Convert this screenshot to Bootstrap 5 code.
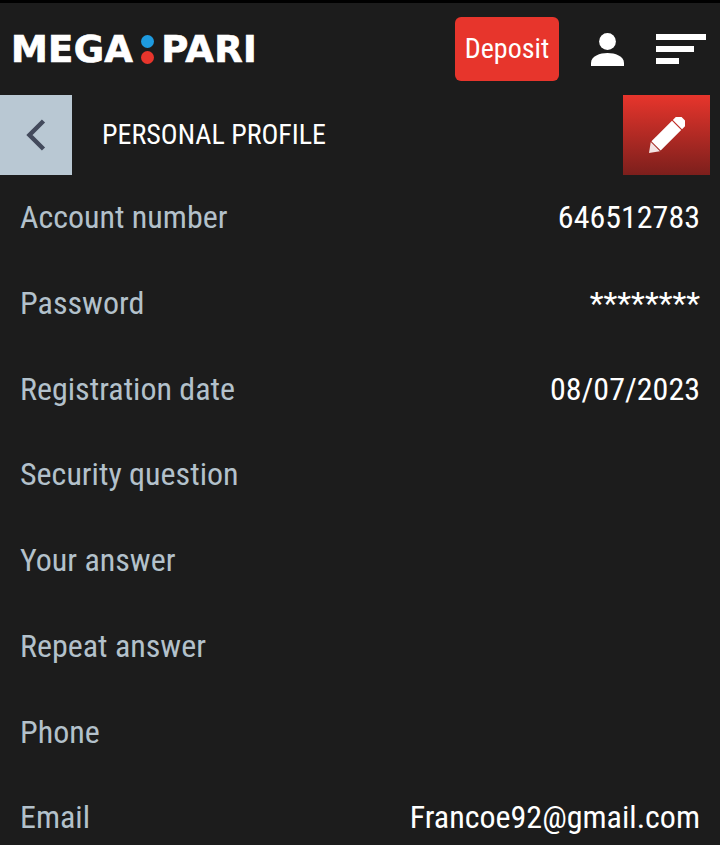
<!DOCTYPE html>
<html lang="en">
<head>
<title>Personal profile</title>
<meta charset="utf-8">
<meta name="viewport" content="width=device-width, initial-scale=1">
<link href="https://cdn.jsdelivr.net/npm/bootstrap@5.3.3/dist/css/bootstrap.min.css" rel="stylesheet">
<style>
html, body { height: 845px; overflow: hidden; }
body { background: #1c1c1c; font-family: Roboto, "Liberation Sans", sans-serif; font-stretch: 75%; border-top: 3px solid #000; }
.top-bar { height: 92px; padding: 0 14px 0 11px; }
.logo-text { font-family: "DejaVu Sans", sans-serif; font-weight: 700; font-size: 37px; letter-spacing: .3px; line-height: 1; color: #fff; font-stretch: normal; -webkit-text-stroke: .7px #fff; }
.logo-dots { width: 13px; gap: 3px; margin: 0 7px 0 8px; }
.logo-dots i { display: block; width: 13px; height: 13px; border-radius: 50%; }
.deposit-btn { width: 104px; height: 64px; background: #e7352c; border: 0; border-radius: 6px; color: #fff; font-size: 28px; font-stretch: 75%; padding: 0; margin-right: 32px; }
.head-row { height: 80px; }
.back-box { width: 72px; background: #b9c8d3; }
.head-title { color: #fff; font-size: 28px; margin-left: 30px; }
.edit-box { width: 87px; margin-right: 10px; background: linear-gradient(#e7352c, #7c1f1c); }
.info-row { height: 85.75px; padding: 0 20px 1.4px 20px; font-size: 32px; }
.info-label { color: #b3c1cb; }
.info-value { color: #fff; }
.user-icon { margin-right: 32px; }
</style>
</head>
<body>
<div class="top-bar d-flex align-items-center">
    <div class="d-flex align-items-center flex-grow-1">
        <span class="logo-text">MEGA</span>
        <span class="logo-dots d-flex flex-column"><i style="background:#1e9be0"></i><i style="background:#e7352c"></i></span>
        <span class="logo-text">PARI</span>
    </div>
    <button type="button" class="deposit-btn">Deposit</button>
    <svg width="33" height="33" viewBox="0 0 33 33" class="user-icon"><circle cx="16.5" cy="8.5" r="8.4" fill="#fff"/><path d="M0 33v-3c0-7 9-10 16.5-10S33 23 33 30v3z" fill="#fff"/></svg>
    <svg width="50" height="30" viewBox="0 0 50 30" class="flex-shrink-0"><rect width="50" height="6" fill="#fff"/><rect y="12" width="38" height="6" fill="#fff"/><rect y="24" width="23" height="6" fill="#fff"/></svg>
</div>
<div class="head-row d-flex align-items-stretch">
    <div class="back-box d-flex align-items-center justify-content-center">
        <svg width="20" height="32" viewBox="0 0 20 32"><path d="M17.500 2 3.500 16l14 14" fill="none" stroke="#434a5c" stroke-width="4.500"/></svg>
    </div>
    <div class="head-title flex-grow-1 d-flex align-items-center">PERSONAL PROFILE</div>
    <div class="edit-box d-flex align-items-center justify-content-center">
        <svg width="36" height="36" viewBox="0 0 36 36"><g transform="translate(0 36) rotate(-45)" fill="#fff"><path d="M0 0 9 -6.500V6.500z" fill-opacity=".88"/><rect x="10" y="-6.500" width="29" height="13"/><path d="M40.200 -6.500h5.300c1.800 0 3 1.200 3 3v7c0 1.800-1.200 3-3 3h-5.300z"/></g></svg>
    </div>
</div>
<div class="info-row d-flex align-items-center justify-content-between"><span class="info-label">Account number</span><span class="info-value">646512783</span></div>
<div class="info-row d-flex align-items-center justify-content-between"><span class="info-label">Password</span><span class="info-value">********</span></div>
<div class="info-row d-flex align-items-center justify-content-between"><span class="info-label">Registration date</span><span class="info-value">08/07/2023</span></div>
<div class="info-row d-flex align-items-center justify-content-between"><span class="info-label">Security question</span></div>
<div class="info-row d-flex align-items-center justify-content-between"><span class="info-label">Your answer</span></div>
<div class="info-row d-flex align-items-center justify-content-between"><span class="info-label">Repeat answer</span></div>
<div class="info-row d-flex align-items-center justify-content-between"><span class="info-label">Phone</span></div>
<div class="info-row d-flex align-items-center justify-content-between"><span class="info-label">Email</span><span class="info-value">Francoe92@gmail.com</span></div>
<script src="https://cdn.jsdelivr.net/npm/bootstrap@5.3.3/dist/js/bootstrap.bundle.min.js"></script>
</body>
</html>
